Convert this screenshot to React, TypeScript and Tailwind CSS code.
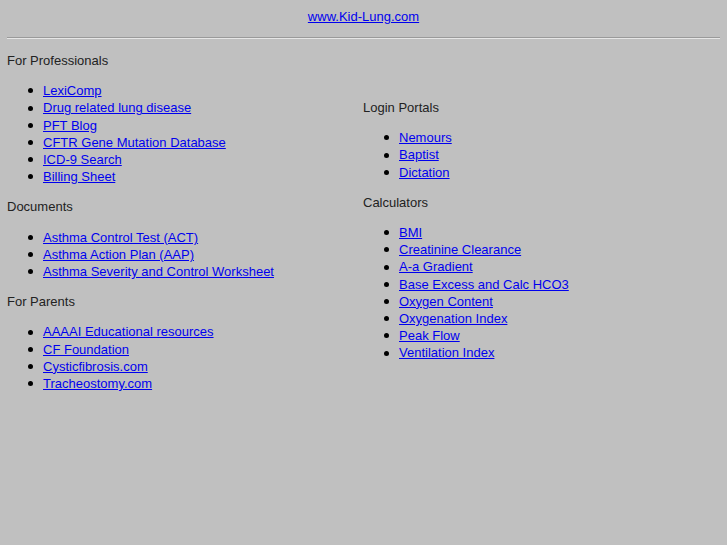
const professionals = [
  'LexiComp',
  'Drug related lung disease',
  'PFT Blog',
  'CFTR Gene Mutation Database',
  'ICD-9 Search',
  'Billing Sheet',
]

const documents = [
  'Asthma Control Test (ACT)',
  'Asthma Action Plan (AAP)',
  'Asthma Severity and Control Worksheet',
]

const parents = [
  'AAAAI Educational resources',
  'CF Foundation',
  'Cysticfibrosis.com',
  'Tracheostomy.com',
]

const portals = ['Nemours', 'Baptist', 'Dictation']

const calculators = [
  'BMI',
  'Creatinine Clearance',
  'A-a Gradient',
  'Base Excess and Calc HCO3',
  'Oxygen Content',
  'Oxygenation Index',
  'Peak Flow',
  'Ventilation Index',
]

function Section({ title, links, first }: { title: string; links: string[]; first?: boolean }) {
  return (
    <div>
      <p className={first ? 'text-[#222]' : 'mt-[13px] text-[#222]'}>{title}</p>
      <ul className="mt-[13px] pl-[36px]">
        {links.map(l => (
          <li key={l} className="flex items-center">
            <span className="ml-[-15px] mr-[10px] h-[5px] w-[5px] shrink-0 rounded-full bg-black" />
            <a href="#" className="text-[#0000ee] underline">{l}</a>
          </li>
        ))}
      </ul>
    </div>
  )
}

export default function App() {
  return (
    <div
      className="min-h-[545px] bg-[#c0c0c0] px-[7px] pt-[9px] text-[13px] leading-[17.2px] text-black"
      style={{ fontFamily: '"Liberation Sans", Arial, sans-serif' }}
    >
      <div className="text-center leading-[16px]">
        <a href="#" className="text-[#0000ee] underline">www.Kid-Lung.com</a>
      </div>
      <div className="mt-[12px] border-t border-b border-t-[#9a9a9a] border-b-[#e6e6e6]" />
      <div className="mt-[13px] flex">
        <div className="w-[356px]">
          <Section title="For Professionals" links={professionals} first />
          <Section title="Documents" links={documents} />
          <Section title="For Parents" links={parents} />
        </div>
        <div className="flex-1 pt-[47px]">
          <Section title="Login Portals" links={portals} first />
          <Section title="Calculators" links={calculators} />
        </div>
      </div>
    </div>
  )
}
